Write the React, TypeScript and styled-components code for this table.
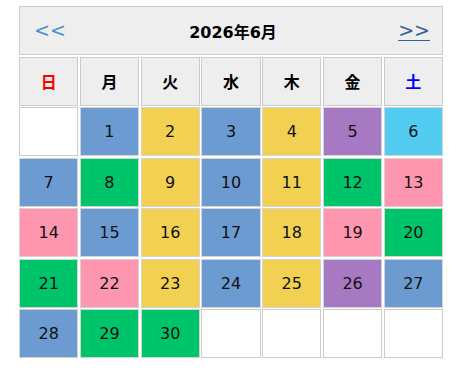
import React from "react";
import styled, { createGlobalStyle } from "styled-components";

const GlobalStyle = createGlobalStyle`
  html, body {
    margin: 0;
    padding: 0;
    background: #fff;
  }
  body {
    font-family: "DejaVu Sans", "Noto Sans CJK JP", sans-serif;
  }
`;

type Tone = "blue" | "yellow" | "green" | "pink" | "purple" | "cyan" | "none";

const TONES: Record<Tone, string> = {
  blue: "#6b9bd1",
  yellow: "#f1d052",
  green: "#00c46a",
  pink: "#ff96b0",
  purple: "#a679c2",
  cyan: "#52cdf1",
  none: "#ffffff",
};

const WEEKDAYS = ["日", "月", "火", "水", "木", "金", "土"];

const DAYS: { day: number | null; tone: Tone }[] = [
  { day: null, tone: "none" },
  { day: 1, tone: "blue" },
  { day: 2, tone: "yellow" },
  { day: 3, tone: "blue" },
  { day: 4, tone: "yellow" },
  { day: 5, tone: "purple" },
  { day: 6, tone: "cyan" },
  { day: 7, tone: "blue" },
  { day: 8, tone: "green" },
  { day: 9, tone: "yellow" },
  { day: 10, tone: "blue" },
  { day: 11, tone: "yellow" },
  { day: 12, tone: "green" },
  { day: 13, tone: "pink" },
  { day: 14, tone: "pink" },
  { day: 15, tone: "blue" },
  { day: 16, tone: "yellow" },
  { day: 17, tone: "blue" },
  { day: 18, tone: "yellow" },
  { day: 19, tone: "pink" },
  { day: 20, tone: "green" },
  { day: 21, tone: "green" },
  { day: 22, tone: "pink" },
  { day: 23, tone: "yellow" },
  { day: 24, tone: "blue" },
  { day: 25, tone: "yellow" },
  { day: 26, tone: "purple" },
  { day: 27, tone: "blue" },
  { day: 28, tone: "blue" },
  { day: 29, tone: "green" },
  { day: 30, tone: "green" },
  { day: null, tone: "none" },
  { day: null, tone: "none" },
  { day: null, tone: "none" },
  { day: null, tone: "none" },
];

const App = () => {
  return (
    <>
      <GlobalStyle />
      <Page>
        <Calendar>
          <MonthBar>
            <NavLink href="#">&lt;&lt;</NavLink>
            <Title>2026年6月</Title>
            <NavLink href="#" $current>
              &gt;&gt;
            </NavLink>
          </MonthBar>
          {WEEKDAYS.map((w, i) => (
            <WeekdayCell key={w} $color={i === 0 ? "#ff0000" : i === 6 ? "#0000ff" : "#000"}>
              {w}
            </WeekdayCell>
          ))}
          {DAYS.map((d, i) => (
            <DayCell key={i} $bg={TONES[d.tone]} $empty={d.day === null}>
              {d.day}
            </DayCell>
          ))}
        </Calendar>
      </Page>
    </>
  );
};

export default App;

const Page = styled.div`
  padding: 6px 0 0 19px;
`;

const Calendar = styled.div`
  width: 424px;
  display: grid;
  grid-template-columns: repeat(7, 1fr);
  grid-auto-rows: 49px;
  gap: 1.5px;
`;

const MonthBar = styled.div`
  grid-column: 1 / -1;
  box-sizing: border-box;
  display: flex;
  align-items: center;
  justify-content: space-between;
  padding: 0 12px 0 14px;
  background: #eeeeee;
  border: 1px solid #cccccc;
`;

const NavLink = styled.a<{ $current?: boolean }>`
  font-size: 19px;
  line-height: 1;
  color: ${(p) => (p.$current ? "#2f629f" : "#4a8fd6")};
  text-decoration: ${(p) => (p.$current ? "underline" : "none")};
  text-underline-offset: 3px;
`;

const Title = styled.div`
  font-size: 16px;
  font-weight: bold;
  color: #000;
  margin-left: 2px;
`;

const WeekdayCell = styled.div<{ $color: string }>`
  box-sizing: border-box;
  display: flex;
  align-items: center;
  justify-content: center;
  background: #eeeeee;
  border: 1px solid #cccccc;
  font-size: 16px;
  font-weight: bold;
  color: ${(p) => p.$color};
`;

const DayCell = styled.div<{ $bg: string; $empty: boolean }>`
  box-sizing: border-box;
  display: flex;
  align-items: center;
  justify-content: center;
  background: ${(p) => p.$bg};
  border: 1px solid ${(p) => (p.$empty ? "#cccccc" : "#d4d4d4")};
  font-size: 16px;
  color: #111;
`;
